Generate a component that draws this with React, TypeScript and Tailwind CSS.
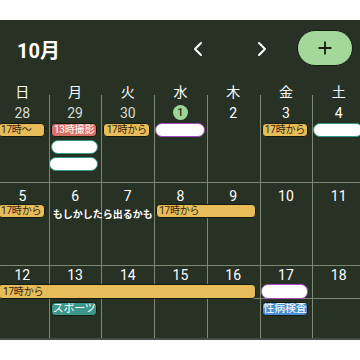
import { ChevronLeft, ChevronRight, Plus } from 'lucide-react';

const days = ['日', '月', '火', '水', '木', '金', '土'];

const colStart = ['col-start-1', 'col-start-2', 'col-start-3', 'col-start-4', 'col-start-5', 'col-start-6', 'col-start-7'];

function Lines() {
  // column dividers, behind the events
  return (
    <>
      {colStart.map((c) => (
        <div key={c} className={`${c} row-span-full border-l border-[#7d8772]`} />
      ))}
    </>
  );
}

function Dates({ nums, dim = [], pt }: { nums: number[]; dim?: number[]; pt: string }) {
  return (
    <>
      {nums.map((n, i) => (
        <div key={n} className={`${colStart[i]} row-start-1 flex justify-center ${pt}`}>
          {n === 1 ? (
            <span className="w-[15px] h-[15px] rounded-full bg-[#9dd596] text-[#1c2a19] text-[11px] leading-[15px] text-center font-medium">1</span>
          ) : (
            <span className={`text-[14px] leading-[16px] ${dim.includes(n) ? 'text-[#d8dbd3]' : 'text-white'}`}>{n}</span>
          )}
        </div>
      ))}
    </>
  );
}

function Chip({ cls, text, tone }: { cls: string; text: string; tone: string }) {
  return (
    <div className={`${cls} ml-[2px] mr-[4px] rounded-[4px] border border-[#161b10] px-[2px] text-[10px] leading-[12px] tracking-[-0.2px] whitespace-nowrap overflow-hidden flex items-center ${tone}`}>
      {text}
    </div>
  );
}

function Blank({ cls, ring }: { cls: string; ring: string }) {
  return <div className={`${cls} rounded-[7px] bg-white border-[1.5px] ${ring}`} />;
}

const yellow = 'bg-[#e8bc58] text-[#2b2616]';

export default function App() {
  return (
    <div className="w-[360px] h-[360px] bg-white overflow-hidden font-[Roboto,'Noto_Sans_CJK_JP',sans-serif]">
      <div className="mt-[20px] h-[320px] bg-[#283224] border-b-2 border-[#4a4a48] overflow-hidden">
        <header className="h-[60px] flex items-start pt-[18px] pl-[17px] pr-[7px]">
          <h1 className="text-white text-[20px] leading-[24px] font-bold mt-[1px]">10月</h1>
          <div className="ml-auto flex items-center gap-[40px] mt-[-1px]">
            <ChevronLeft size={24} strokeWidth={2} className="text-white" />
            <ChevronRight size={24} strokeWidth={2} className="text-white" />
          </div>
          <button className="ml-[23px] mt-[-8px] w-[56px] h-[36px] rounded-full bg-[#a4d89b] border border-[#141a10] flex items-center justify-center">
            <Plus size={20} strokeWidth={2.2} className="text-[#17210f]" />
          </button>
        </header>

        <div className="ml-[-4px] w-[369px]">
          <div className="grid grid-cols-7 h-[20px]">
            {days.map((d, i) => (
              <div key={d} className="relative flex justify-center pt-[4px]">
                {i > 0 && <span className="absolute left-0 top-[15px] bottom-0 w-px bg-[#7d8772]" />}
                <span className="text-white text-[14px] leading-[16px]">{d}</span>
              </div>
            ))}
          </div>

          {/* week 1 */}
          <div className="grid grid-cols-7 grid-rows-[20px_14px_14px_14px_1fr] gap-y-[3px] h-[83px] border-b border-[#7d8772]">
            <Lines />
            <Dates nums={[28, 29, 30, 1, 2, 3, 4]} dim={[28, 29, 30]} pt="pt-[5px]" />
            <Chip cls="col-start-1 row-start-2" text="17時〜" tone={yellow} />
            <Chip cls="col-start-2 row-start-2 justify-center" text="13時撮影" tone="bg-[#d9716b] text-white" />
            <Chip cls="col-start-3 row-start-2 justify-center" text="17時から" tone={yellow} />
            <Blank cls="col-start-4 row-start-2 ml-[1px] mr-[2px]" ring="border-[#a54fc4]" />
            <Chip cls="col-start-6 row-start-2 justify-center" text="17時から" tone={yellow} />
            <Blank cls="col-start-7 row-start-2 ml-[1px] mr-[2px]" ring="border-[#35978a]" />
            <Blank cls="col-start-2 row-start-3 ml-[2px] mr-[3px]" ring="border-[#35978a]" />
            <Blank cls="col-start-2 row-start-4 ml-[0px] mr-[3px]" ring="border-[#35978a]" />
          </div>

          {/* week 2 */}
          <div className="grid grid-cols-7 grid-rows-[18px_14px_1fr] gap-y-[3px] h-[83px] border-b border-[#7d8772]">
            <Lines />
            <Dates nums={[5, 6, 7, 8, 9, 10, 11]} pt="pt-[5px]" />
            <Chip cls="col-start-1 row-start-2" text="17時から" tone={yellow} />
            <div className="col-start-2 col-span-2 row-start-2 pl-[4px] pt-[5px] text-white text-[10px] leading-[12px] font-bold whitespace-nowrap">
              もしかしたら出るかも
            </div>
            <Chip cls="col-start-4 col-span-2 row-start-2" text="17時から" tone={yellow} />
          </div>

          {/* week 3 */}
          <div className="grid grid-cols-7 grid-rows-[15px_15px_14px_1fr] gap-y-[3px] h-[72px]">
            <Lines />
            <div className="col-start-1 col-span-7 row-start-2 border-b border-[#7d8772]" />
            <Dates nums={[12, 13, 14, 15, 16, 17, 18]} pt="pt-[1px]" />
            <Chip cls="col-start-1 col-span-5 row-start-2 pl-[4px]" text="17時から" tone={yellow} />
            <Blank cls="col-start-6 row-start-2 ml-[1px] mr-[4px]" ring="border-[#a54fc4]" />
            <Chip cls="col-start-2 row-start-3 justify-center text-[11px]" text="スポーツ" tone="bg-[#3b988a] text-white" />
            <Chip cls="col-start-6 row-start-3 justify-center text-[11px]" text="性病検査" tone="bg-[#4a8fd2] text-white" />
          </div>
        </div>
      </div>
    </div>
  );
}
